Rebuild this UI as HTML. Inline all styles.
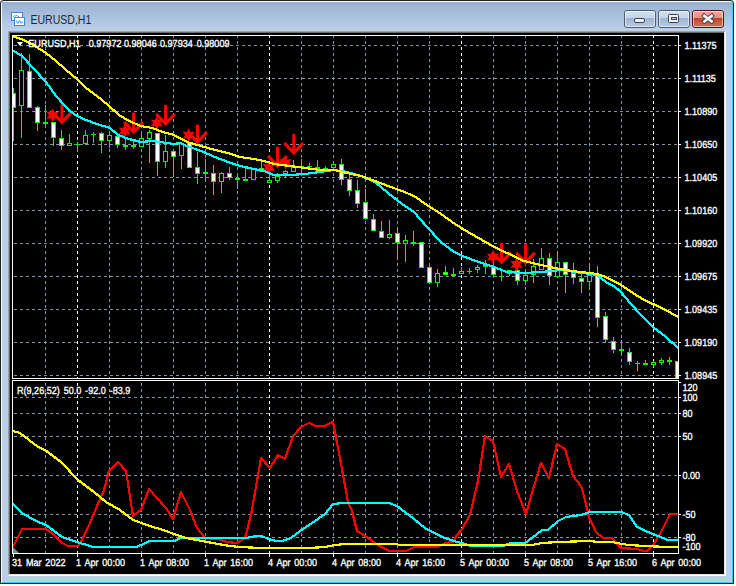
<!DOCTYPE html><html><head><meta charset="utf-8"><style>html,body{margin:0;padding:0;background:#ffffff;}svg{display:block;}text{font-family:"Liberation Sans", sans-serif;}</style></head><body>
<svg width="736" height="586" viewBox="0 0 736 586">
<defs>
<linearGradient id="tb" x1="0" y1="0" x2="0" y2="1"><stop offset="0" stop-color="#98b1cf"/><stop offset="1" stop-color="#bdd2ea"/></linearGradient>
<linearGradient id="btn" x1="0" y1="0" x2="0" y2="1"><stop offset="0" stop-color="#d3e1f1"/><stop offset="0.42" stop-color="#c3d5ea"/><stop offset="0.45" stop-color="#9db4cf"/><stop offset="1" stop-color="#b9cde4"/></linearGradient>
<linearGradient id="cls" x1="0" y1="0" x2="0" y2="1"><stop offset="0" stop-color="#eaa999"/><stop offset="0.42" stop-color="#e09684"/><stop offset="0.45" stop-color="#c2432b"/><stop offset="1" stop-color="#d5745c"/></linearGradient>
<clipPath id="cp"><rect x="13" y="36" width="665" height="342"/></clipPath>
<clipPath id="ci"><rect x="13" y="381" width="665" height="172"/></clipPath>
</defs>

<path d="M0,584 L0,4 Q0,0 4,0 L730,0 Q734,0 734,4 L734,584 Z" fill="#202020"/>
<path d="M1,583 L1,4 Q1,1 4,1 L730,1 Q733,1 733,4 L733,583 Z" fill="#ffffff"/>
<rect x="732" y="3" width="1" height="580" fill="#48c4ee"/>
<rect x="2" y="582" width="731" height="1" fill="#48c4ee"/>
<rect x="2" y="2" width="730" height="580" fill="#b9d1e8"/>
<rect x="2" y="2" width="730" height="29" fill="url(#tb)"/>
<rect x="8" y="31" width="718" height="545" fill="#ffffff"/>
<rect x="8" y="31" width="717" height="544" fill="#a0a0a0"/>
<rect x="9" y="32" width="716" height="543" fill="#e3e3e3"/>
<rect x="9" y="32" width="715" height="542" fill="#696969"/>
<rect x="10" y="33" width="714" height="541" fill="#000000"/>
<g shape-rendering="crispEdges">
<rect x="11" y="12" width="12" height="9" fill="#ffffff"/>
<rect x="11" y="12" width="1" height="1" fill="#3f8f9a"/>
<rect x="11" y="20" width="1" height="1" fill="#3f8f9a"/>
<rect x="12" y="12" width="1" height="1" fill="#3c86f2"/>
<rect x="12" y="20" width="1" height="1" fill="#3c86f2"/>
<rect x="13" y="12" width="1" height="1" fill="#3f8f9a"/>
<rect x="13" y="20" width="1" height="1" fill="#3f8f9a"/>
<rect x="14" y="12" width="1" height="1" fill="#3c86f2"/>
<rect x="14" y="20" width="1" height="1" fill="#3c86f2"/>
<rect x="15" y="12" width="1" height="1" fill="#3f8f9a"/>
<rect x="15" y="20" width="1" height="1" fill="#3f8f9a"/>
<rect x="16" y="12" width="1" height="1" fill="#3c86f2"/>
<rect x="16" y="20" width="1" height="1" fill="#3c86f2"/>
<rect x="17" y="12" width="1" height="1" fill="#3f8f9a"/>
<rect x="17" y="20" width="1" height="1" fill="#3f8f9a"/>
<rect x="18" y="12" width="1" height="1" fill="#3c86f2"/>
<rect x="18" y="20" width="1" height="1" fill="#3c86f2"/>
<rect x="19" y="12" width="1" height="1" fill="#3f8f9a"/>
<rect x="19" y="20" width="1" height="1" fill="#3f8f9a"/>
<rect x="20" y="12" width="1" height="1" fill="#3c86f2"/>
<rect x="20" y="20" width="1" height="1" fill="#3c86f2"/>
<rect x="21" y="12" width="1" height="1" fill="#3f8f9a"/>
<rect x="21" y="20" width="1" height="1" fill="#3f8f9a"/>
<rect x="22" y="12" width="1" height="1" fill="#3c86f2"/>
<rect x="22" y="20" width="1" height="1" fill="#3c86f2"/>
<rect x="11" y="13" width="1" height="1" fill="#3c86f2"/>
<rect x="22" y="13" width="1" height="1" fill="#3f8f9a"/>
<rect x="11" y="14" width="1" height="1" fill="#3f8f9a"/>
<rect x="22" y="14" width="1" height="1" fill="#3c86f2"/>
<rect x="11" y="15" width="1" height="1" fill="#3c86f2"/>
<rect x="22" y="15" width="1" height="1" fill="#3f8f9a"/>
<rect x="11" y="16" width="1" height="1" fill="#3f8f9a"/>
<rect x="22" y="16" width="1" height="1" fill="#3c86f2"/>
<rect x="11" y="17" width="1" height="1" fill="#3c86f2"/>
<rect x="22" y="17" width="1" height="1" fill="#3f8f9a"/>
<rect x="11" y="18" width="1" height="1" fill="#3f8f9a"/>
<rect x="22" y="18" width="1" height="1" fill="#3c86f2"/>
<rect x="11" y="19" width="1" height="1" fill="#3c86f2"/>
<rect x="22" y="19" width="1" height="1" fill="#3f8f9a"/>
<rect x="14" y="17" width="11" height="9" fill="#ffffff"/>
<rect x="14" y="17" width="1" height="1" fill="#3f8f9a"/>
<rect x="14" y="25" width="1" height="1" fill="#3f8f9a"/>
<rect x="15" y="17" width="1" height="1" fill="#3c86f2"/>
<rect x="15" y="25" width="1" height="1" fill="#3c86f2"/>
<rect x="16" y="17" width="1" height="1" fill="#3f8f9a"/>
<rect x="16" y="25" width="1" height="1" fill="#3f8f9a"/>
<rect x="17" y="17" width="1" height="1" fill="#3c86f2"/>
<rect x="17" y="25" width="1" height="1" fill="#3c86f2"/>
<rect x="18" y="17" width="1" height="1" fill="#3f8f9a"/>
<rect x="18" y="25" width="1" height="1" fill="#3f8f9a"/>
<rect x="19" y="17" width="1" height="1" fill="#3c86f2"/>
<rect x="19" y="25" width="1" height="1" fill="#3c86f2"/>
<rect x="20" y="17" width="1" height="1" fill="#3f8f9a"/>
<rect x="20" y="25" width="1" height="1" fill="#3f8f9a"/>
<rect x="21" y="17" width="1" height="1" fill="#3c86f2"/>
<rect x="21" y="25" width="1" height="1" fill="#3c86f2"/>
<rect x="22" y="17" width="1" height="1" fill="#3f8f9a"/>
<rect x="22" y="25" width="1" height="1" fill="#3f8f9a"/>
<rect x="23" y="17" width="1" height="1" fill="#3c86f2"/>
<rect x="23" y="25" width="1" height="1" fill="#3c86f2"/>
<rect x="24" y="17" width="1" height="1" fill="#3f8f9a"/>
<rect x="24" y="25" width="1" height="1" fill="#3f8f9a"/>
<rect x="14" y="18" width="1" height="1" fill="#3c86f2"/>
<rect x="24" y="18" width="1" height="1" fill="#3c86f2"/>
<rect x="14" y="19" width="1" height="1" fill="#3f8f9a"/>
<rect x="24" y="19" width="1" height="1" fill="#3f8f9a"/>
<rect x="14" y="20" width="1" height="1" fill="#3c86f2"/>
<rect x="24" y="20" width="1" height="1" fill="#3c86f2"/>
<rect x="14" y="21" width="1" height="1" fill="#3f8f9a"/>
<rect x="24" y="21" width="1" height="1" fill="#3f8f9a"/>
<rect x="14" y="22" width="1" height="1" fill="#3c86f2"/>
<rect x="24" y="22" width="1" height="1" fill="#3c86f2"/>
<rect x="14" y="23" width="1" height="1" fill="#3f8f9a"/>
<rect x="24" y="23" width="1" height="1" fill="#3f8f9a"/>
<rect x="14" y="24" width="1" height="1" fill="#3c86f2"/>
<rect x="24" y="24" width="1" height="1" fill="#3c86f2"/>
</g>
<polyline points="13,16.8 14.3,15.6 15.2,16.2 16.8,15.3 18,16.6 19,16.6" fill="none" stroke="#4f8ff0" stroke-width="1"/>
<polyline points="16.2,20.4 17.8,23.3 19.6,20.4 21.4,23.3 22.8,21.5" fill="none" stroke="#3f86f0" stroke-width="1"/>
<text transform="translate(30.5,23.5) scale(0.78,1)" font-size="13.5" fill="#1e2440">EURUSD,H1</text>
<rect x="624.5" y="10.5" width="31" height="17" rx="2.5" fill="url(#btn)" stroke="#4f5b6f" stroke-width="1"/><rect x="625.5" y="11.5" width="29" height="15" rx="1.5" fill="none" stroke="rgba(255,255,255,0.55)" stroke-width="1"/>
<rect x="658.5" y="10.5" width="31" height="17" rx="2.5" fill="url(#btn)" stroke="#4f5b6f" stroke-width="1"/><rect x="659.5" y="11.5" width="29" height="15" rx="1.5" fill="none" stroke="rgba(255,255,255,0.55)" stroke-width="1"/>
<rect x="692.5" y="10.5" width="31" height="17" rx="2.5" fill="url(#cls)" stroke="#4a1418" stroke-width="1"/><rect x="693.5" y="11.5" width="29" height="15" rx="1.5" fill="none" stroke="rgba(255,255,255,0.55)" stroke-width="1"/>
<rect x="634.5" y="18.5" width="10" height="4" rx="1.5" fill="#f2f2f2" stroke="#3c4352" stroke-width="1"/>
<rect x="668.5" y="14.5" width="10" height="8" rx="1" fill="#f2f2f2" stroke="#3c4352" stroke-width="1"/>
<rect x="671.5" y="17.5" width="5" height="2" fill="#b8cce2" stroke="#3c4352" stroke-width="1"/>
<path d="M704.3,15.9 L711.7,21.4 M711.7,15.9 L704.3,21.4" stroke="#3a3f4a" stroke-width="4.4" stroke-linecap="square"/>
<path d="M704.3,15.9 L711.7,21.4 M711.7,15.9 L704.3,21.4" stroke="#f6f6f6" stroke-width="2.6" stroke-linecap="square"/>
<g clip-path="url(#cp)" shape-rendering="crispEdges" stroke-width="1" stroke-dasharray="3 3">
<line x1="2" y1="45.5" x2="700" y2="45.5" stroke="#8393a8"/>
<line x1="2" y1="78.5" x2="700" y2="78.5" stroke="#8393a8"/>
<line x1="2" y1="111.5" x2="700" y2="111.5" stroke="#8393a8"/>
<line x1="2" y1="144.5" x2="700" y2="144.5" stroke="#8393a8"/>
<line x1="2" y1="177.5" x2="700" y2="177.5" stroke="#8393a8"/>
<line x1="2" y1="210.5" x2="700" y2="210.5" stroke="#8393a8"/>
<line x1="2" y1="243.5" x2="700" y2="243.5" stroke="#8393a8"/>
<line x1="2" y1="276.5" x2="700" y2="276.5" stroke="#8393a8"/>
<line x1="2" y1="309.5" x2="700" y2="309.5" stroke="#8393a8"/>
<line x1="2" y1="342.5" x2="700" y2="342.5" stroke="#8393a8"/>
<line x1="2" y1="375.5" x2="700" y2="375.5" stroke="#8393a8"/>
<line x1="45.5" y1="-1" x2="45.5" y2="600" stroke="#8393a8"/>
<line x1="77.5" y1="-1" x2="77.5" y2="600" stroke="#ffffff"/>
<line x1="109.5" y1="-1" x2="109.5" y2="600" stroke="#8393a8"/>
<line x1="141.5" y1="-1" x2="141.5" y2="600" stroke="#8393a8"/>
<line x1="173.5" y1="-1" x2="173.5" y2="600" stroke="#8393a8"/>
<line x1="205.5" y1="-1" x2="205.5" y2="600" stroke="#8393a8"/>
<line x1="237.5" y1="-1" x2="237.5" y2="600" stroke="#8393a8"/>
<line x1="269.5" y1="-1" x2="269.5" y2="600" stroke="#ffffff"/>
<line x1="301.5" y1="-1" x2="301.5" y2="600" stroke="#8393a8"/>
<line x1="333.5" y1="-1" x2="333.5" y2="600" stroke="#8393a8"/>
<line x1="365.5" y1="-1" x2="365.5" y2="600" stroke="#8393a8"/>
<line x1="397.5" y1="-1" x2="397.5" y2="600" stroke="#8393a8"/>
<line x1="429.5" y1="-1" x2="429.5" y2="600" stroke="#8393a8"/>
<line x1="461.5" y1="-1" x2="461.5" y2="600" stroke="#ffffff"/>
<line x1="493.5" y1="-1" x2="493.5" y2="600" stroke="#8393a8"/>
<line x1="525.5" y1="-1" x2="525.5" y2="600" stroke="#8393a8"/>
<line x1="557.5" y1="-1" x2="557.5" y2="600" stroke="#8393a8"/>
<line x1="589.5" y1="-1" x2="589.5" y2="600" stroke="#8393a8"/>
<line x1="621.5" y1="-1" x2="621.5" y2="600" stroke="#8393a8"/>
<line x1="653.5" y1="-1" x2="653.5" y2="600" stroke="#ffffff"/>
</g>
<g clip-path="url(#ci)" shape-rendering="crispEdges" stroke-width="1" stroke-dasharray="3 3">
<line x1="2" y1="397.5" x2="700" y2="397.5" stroke="#8393a8"/>
<line x1="2" y1="413.5" x2="700" y2="413.5" stroke="#8393a8"/>
<line x1="2" y1="436.5" x2="700" y2="436.5" stroke="#8393a8"/>
<line x1="2" y1="475.5" x2="700" y2="475.5" stroke="#8393a8"/>
<line x1="2" y1="514.5" x2="700" y2="514.5" stroke="#8393a8"/>
<line x1="2" y1="537.5" x2="700" y2="537.5" stroke="#8393a8"/>
<line x1="45.5" y1="-1" x2="45.5" y2="600" stroke="#8393a8"/>
<line x1="77.5" y1="-1" x2="77.5" y2="600" stroke="#ffffff"/>
<line x1="109.5" y1="-1" x2="109.5" y2="600" stroke="#8393a8"/>
<line x1="141.5" y1="-1" x2="141.5" y2="600" stroke="#8393a8"/>
<line x1="173.5" y1="-1" x2="173.5" y2="600" stroke="#8393a8"/>
<line x1="205.5" y1="-1" x2="205.5" y2="600" stroke="#8393a8"/>
<line x1="237.5" y1="-1" x2="237.5" y2="600" stroke="#8393a8"/>
<line x1="269.5" y1="-1" x2="269.5" y2="600" stroke="#ffffff"/>
<line x1="301.5" y1="-1" x2="301.5" y2="600" stroke="#8393a8"/>
<line x1="333.5" y1="-1" x2="333.5" y2="600" stroke="#8393a8"/>
<line x1="365.5" y1="-1" x2="365.5" y2="600" stroke="#8393a8"/>
<line x1="397.5" y1="-1" x2="397.5" y2="600" stroke="#8393a8"/>
<line x1="429.5" y1="-1" x2="429.5" y2="600" stroke="#8393a8"/>
<line x1="461.5" y1="-1" x2="461.5" y2="600" stroke="#ffffff"/>
<line x1="493.5" y1="-1" x2="493.5" y2="600" stroke="#8393a8"/>
<line x1="525.5" y1="-1" x2="525.5" y2="600" stroke="#8393a8"/>
<line x1="557.5" y1="-1" x2="557.5" y2="600" stroke="#8393a8"/>
<line x1="589.5" y1="-1" x2="589.5" y2="600" stroke="#8393a8"/>
<line x1="621.5" y1="-1" x2="621.5" y2="600" stroke="#8393a8"/>
<line x1="653.5" y1="-1" x2="653.5" y2="600" stroke="#ffffff"/>
</g>
<g shape-rendering="crispEdges" fill="#ffffff">
<rect x="12" y="35" width="667" height="1"/>
<rect x="12" y="35" width="1" height="344"/>
<rect x="678" y="35" width="1" height="344"/>
<rect x="12" y="378" width="667" height="1"/>
<rect x="12" y="380" width="667" height="1"/>
<rect x="12" y="380" width="1" height="174"/>
<rect x="678" y="380" width="1" height="174"/>
<rect x="12" y="553" width="667" height="1"/>
<rect x="679" y="45" width="2" height="1"/>
<rect x="679" y="78" width="2" height="1"/>
<rect x="679" y="111" width="2" height="1"/>
<rect x="679" y="144" width="2" height="1"/>
<rect x="679" y="177" width="2" height="1"/>
<rect x="679" y="210" width="2" height="1"/>
<rect x="679" y="243" width="2" height="1"/>
<rect x="679" y="276" width="2" height="1"/>
<rect x="679" y="309" width="2" height="1"/>
<rect x="679" y="342" width="2" height="1"/>
<rect x="679" y="375" width="2" height="1"/>
<rect x="679" y="382" width="2" height="1"/>
<rect x="679" y="397" width="2" height="1"/>
<rect x="679" y="413" width="2" height="1"/>
<rect x="679" y="436" width="2" height="1"/>
<rect x="679" y="475" width="2" height="1"/>
<rect x="679" y="514" width="2" height="1"/>
<rect x="679" y="537" width="2" height="1"/>
<rect x="13" y="554" width="1" height="3"/>
<rect x="77" y="554" width="1" height="3"/>
<rect x="141" y="554" width="1" height="3"/>
<rect x="205" y="554" width="1" height="3"/>
<rect x="269" y="554" width="1" height="3"/>
<rect x="333" y="554" width="1" height="3"/>
<rect x="397" y="554" width="1" height="3"/>
<rect x="461" y="554" width="1" height="3"/>
<rect x="525" y="554" width="1" height="3"/>
<rect x="589" y="554" width="1" height="3"/>
<rect x="653" y="554" width="1" height="3"/>
</g>
<g clip-path="url(#cp)" shape-rendering="crispEdges">
<rect x="13" y="88" width="1" height="53" fill="#00ff00"/>
<rect x="11" y="93" width="5" height="15" fill="#00ff00"/>
<rect x="12" y="94" width="3" height="13" fill="#ffffff"/>
<rect x="21" y="53" width="1" height="85" fill="#00ff00"/>
<rect x="19" y="70" width="5" height="36" fill="#00ff00"/>
<rect x="20" y="71" width="3" height="34" fill="#000000"/>
<rect x="29" y="54" width="1" height="54" fill="#00ff00"/>
<rect x="27" y="71" width="5" height="37" fill="#00ff00"/>
<rect x="28" y="72" width="3" height="35" fill="#ffffff"/>
<rect x="37" y="106" width="1" height="25" fill="#00ff00"/>
<rect x="35" y="107" width="5" height="16" fill="#00ff00"/>
<rect x="36" y="108" width="3" height="14" fill="#ffffff"/>
<rect x="45" y="105" width="1" height="21" fill="#00ff00"/>
<rect x="43" y="122" width="5" height="2" fill="#00ff00"/>
<rect x="53" y="122" width="1" height="24" fill="#00ff00"/>
<rect x="51" y="122" width="5" height="16" fill="#00ff00"/>
<rect x="52" y="123" width="3" height="14" fill="#ffffff"/>
<rect x="61" y="130" width="1" height="20" fill="#00ff00"/>
<rect x="59" y="138" width="5" height="8" fill="#00ff00"/>
<rect x="60" y="139" width="3" height="6" fill="#ffffff"/>
<rect x="69" y="134" width="1" height="12" fill="#00ff00"/>
<rect x="67" y="143" width="5" height="3" fill="#00ff00"/>
<rect x="68" y="144" width="3" height="1" fill="#000000"/>
<rect x="77" y="142" width="1" height="10" fill="#00ff00"/>
<rect x="75" y="144" width="5" height="1" fill="#00ff00"/>
<rect x="85" y="130" width="1" height="15" fill="#00ff00"/>
<rect x="83" y="135" width="5" height="9" fill="#00ff00"/>
<rect x="84" y="136" width="3" height="7" fill="#000000"/>
<rect x="93" y="132" width="1" height="11" fill="#00ff00"/>
<rect x="91" y="134" width="5" height="1" fill="#00ff00"/>
<rect x="101" y="132" width="1" height="21" fill="#00ff00"/>
<rect x="99" y="133" width="5" height="8" fill="#00ff00"/>
<rect x="100" y="134" width="3" height="6" fill="#ffffff"/>
<rect x="109" y="133" width="1" height="15" fill="#00ff00"/>
<rect x="107" y="135" width="5" height="6" fill="#00ff00"/>
<rect x="108" y="136" width="3" height="4" fill="#000000"/>
<rect x="117" y="135" width="1" height="13" fill="#00ff00"/>
<rect x="115" y="136" width="5" height="9" fill="#00ff00"/>
<rect x="116" y="137" width="3" height="7" fill="#ffffff"/>
<rect x="125" y="138" width="1" height="12" fill="#00ff00"/>
<rect x="123" y="145" width="5" height="2" fill="#00ff00"/>
<rect x="133" y="141" width="1" height="8" fill="#00ff00"/>
<rect x="131" y="145" width="5" height="2" fill="#00ff00"/>
<rect x="141" y="131" width="1" height="16" fill="#00ff00"/>
<rect x="139" y="138" width="5" height="9" fill="#00ff00"/>
<rect x="140" y="139" width="3" height="7" fill="#000000"/>
<rect x="149" y="130" width="1" height="33" fill="#00ff00"/>
<rect x="147" y="132" width="5" height="7" fill="#00ff00"/>
<rect x="148" y="133" width="3" height="5" fill="#000000"/>
<rect x="157" y="133" width="1" height="43" fill="#00ff00"/>
<rect x="155" y="133" width="5" height="29" fill="#00ff00"/>
<rect x="156" y="134" width="3" height="27" fill="#ffffff"/>
<rect x="165" y="135" width="1" height="33" fill="#00ff00"/>
<rect x="163" y="151" width="5" height="11" fill="#00ff00"/>
<rect x="164" y="152" width="3" height="9" fill="#000000"/>
<rect x="173" y="151" width="1" height="26" fill="#00ff00"/>
<rect x="171" y="151" width="5" height="6" fill="#00ff00"/>
<rect x="172" y="152" width="3" height="4" fill="#ffffff"/>
<rect x="181" y="142" width="1" height="27" fill="#00ff00"/>
<rect x="179" y="143" width="5" height="13" fill="#00ff00"/>
<rect x="180" y="144" width="3" height="11" fill="#000000"/>
<rect x="189" y="143" width="1" height="25" fill="#00ff00"/>
<rect x="187" y="143" width="5" height="25" fill="#00ff00"/>
<rect x="188" y="144" width="3" height="23" fill="#ffffff"/>
<rect x="197" y="152" width="1" height="32" fill="#00ff00"/>
<rect x="195" y="167" width="5" height="7" fill="#00ff00"/>
<rect x="196" y="168" width="3" height="5" fill="#ffffff"/>
<rect x="205" y="159" width="1" height="22" fill="#00ff00"/>
<rect x="203" y="172" width="5" height="2" fill="#00ff00"/>
<rect x="213" y="165" width="1" height="30" fill="#00ff00"/>
<rect x="211" y="173" width="5" height="9" fill="#00ff00"/>
<rect x="212" y="174" width="3" height="7" fill="#ffffff"/>
<rect x="221" y="172" width="1" height="21" fill="#00ff00"/>
<rect x="219" y="173" width="5" height="9" fill="#00ff00"/>
<rect x="220" y="174" width="3" height="7" fill="#000000"/>
<rect x="229" y="167" width="1" height="13" fill="#00ff00"/>
<rect x="227" y="173" width="5" height="5" fill="#00ff00"/>
<rect x="228" y="174" width="3" height="3" fill="#ffffff"/>
<rect x="237" y="175" width="1" height="14" fill="#00ff00"/>
<rect x="235" y="178" width="5" height="2" fill="#00ff00"/>
<rect x="245" y="168" width="1" height="13" fill="#00ff00"/>
<rect x="243" y="179" width="5" height="2" fill="#00ff00"/>
<rect x="253" y="168" width="1" height="12" fill="#00ff00"/>
<rect x="251" y="168" width="5" height="12" fill="#00ff00"/>
<rect x="252" y="169" width="3" height="10" fill="#000000"/>
<rect x="261" y="162" width="1" height="10" fill="#00ff00"/>
<rect x="259" y="168" width="5" height="4" fill="#00ff00"/>
<rect x="260" y="169" width="3" height="2" fill="#ffffff"/>
<rect x="269" y="173" width="1" height="10" fill="#00ff00"/>
<rect x="267" y="180" width="5" height="3" fill="#00ff00"/>
<rect x="268" y="181" width="3" height="1" fill="#000000"/>
<rect x="277" y="173" width="1" height="10" fill="#00ff00"/>
<rect x="275" y="176" width="5" height="5" fill="#00ff00"/>
<rect x="276" y="177" width="3" height="3" fill="#000000"/>
<rect x="285" y="170" width="1" height="8" fill="#00ff00"/>
<rect x="283" y="171" width="5" height="3" fill="#00ff00"/>
<rect x="284" y="172" width="3" height="1" fill="#000000"/>
<rect x="293" y="160" width="1" height="12" fill="#00ff00"/>
<rect x="291" y="167" width="5" height="5" fill="#00ff00"/>
<rect x="292" y="168" width="3" height="3" fill="#000000"/>
<rect x="301" y="159" width="1" height="14" fill="#00ff00"/>
<rect x="299" y="166" width="5" height="2" fill="#00ff00"/>
<rect x="309" y="163" width="1" height="5" fill="#00ff00"/>
<rect x="307" y="166" width="5" height="1" fill="#00ff00"/>
<rect x="317" y="160" width="1" height="9" fill="#00ff00"/>
<rect x="315" y="167" width="5" height="2" fill="#00ff00"/>
<rect x="325" y="166" width="1" height="3" fill="#00ff00"/>
<rect x="323" y="168" width="5" height="2" fill="#00ff00"/>
<rect x="333" y="162" width="1" height="6" fill="#00ff00"/>
<rect x="331" y="164" width="5" height="4" fill="#00ff00"/>
<rect x="332" y="165" width="3" height="2" fill="#000000"/>
<rect x="341" y="159" width="1" height="26" fill="#00ff00"/>
<rect x="339" y="164" width="5" height="16" fill="#00ff00"/>
<rect x="340" y="165" width="3" height="14" fill="#ffffff"/>
<rect x="349" y="175" width="1" height="21" fill="#00ff00"/>
<rect x="347" y="179" width="5" height="12" fill="#00ff00"/>
<rect x="348" y="180" width="3" height="10" fill="#ffffff"/>
<rect x="357" y="180" width="1" height="28" fill="#00ff00"/>
<rect x="355" y="190" width="5" height="14" fill="#00ff00"/>
<rect x="356" y="191" width="3" height="12" fill="#ffffff"/>
<rect x="365" y="189" width="1" height="31" fill="#00ff00"/>
<rect x="363" y="202" width="5" height="17" fill="#00ff00"/>
<rect x="364" y="203" width="3" height="15" fill="#ffffff"/>
<rect x="373" y="214" width="1" height="17" fill="#00ff00"/>
<rect x="371" y="219" width="5" height="12" fill="#00ff00"/>
<rect x="372" y="220" width="3" height="10" fill="#ffffff"/>
<rect x="381" y="221" width="1" height="17" fill="#00ff00"/>
<rect x="379" y="231" width="5" height="7" fill="#00ff00"/>
<rect x="380" y="232" width="3" height="5" fill="#ffffff"/>
<rect x="389" y="220" width="1" height="19" fill="#00ff00"/>
<rect x="387" y="234" width="5" height="4" fill="#00ff00"/>
<rect x="388" y="235" width="3" height="2" fill="#000000"/>
<rect x="397" y="229" width="1" height="30" fill="#00ff00"/>
<rect x="395" y="233" width="5" height="10" fill="#00ff00"/>
<rect x="396" y="234" width="3" height="8" fill="#ffffff"/>
<rect x="405" y="235" width="1" height="27" fill="#00ff00"/>
<rect x="403" y="240" width="5" height="4" fill="#00ff00"/>
<rect x="404" y="241" width="3" height="2" fill="#000000"/>
<rect x="413" y="231" width="1" height="15" fill="#00ff00"/>
<rect x="411" y="242" width="5" height="2" fill="#00ff00"/>
<rect x="421" y="242" width="1" height="26" fill="#00ff00"/>
<rect x="419" y="242" width="5" height="26" fill="#00ff00"/>
<rect x="420" y="243" width="3" height="24" fill="#ffffff"/>
<rect x="429" y="264" width="1" height="20" fill="#00ff00"/>
<rect x="427" y="267" width="5" height="16" fill="#00ff00"/>
<rect x="428" y="268" width="3" height="14" fill="#ffffff"/>
<rect x="437" y="269" width="1" height="18" fill="#00ff00"/>
<rect x="435" y="273" width="5" height="10" fill="#00ff00"/>
<rect x="436" y="274" width="3" height="8" fill="#000000"/>
<rect x="445" y="266" width="1" height="9" fill="#00ff00"/>
<rect x="443" y="272" width="5" height="3" fill="#00ff00"/>
<rect x="444" y="273" width="3" height="1" fill="#ffffff"/>
<rect x="453" y="268" width="1" height="8" fill="#00ff00"/>
<rect x="451" y="274" width="5" height="2" fill="#00ff00"/>
<rect x="461" y="267" width="1" height="7" fill="#00ff00"/>
<rect x="459" y="271" width="5" height="3" fill="#00ff00"/>
<rect x="460" y="272" width="3" height="1" fill="#000000"/>
<rect x="469" y="268" width="1" height="6" fill="#00ff00"/>
<rect x="467" y="271" width="5" height="1" fill="#00ff00"/>
<rect x="477" y="265" width="1" height="8" fill="#00ff00"/>
<rect x="475" y="267" width="5" height="3" fill="#00ff00"/>
<rect x="476" y="268" width="3" height="1" fill="#000000"/>
<rect x="485" y="260" width="1" height="14" fill="#00ff00"/>
<rect x="483" y="265" width="5" height="2" fill="#00ff00"/>
<rect x="493" y="252" width="1" height="26" fill="#00ff00"/>
<rect x="491" y="266" width="5" height="9" fill="#00ff00"/>
<rect x="492" y="267" width="3" height="7" fill="#ffffff"/>
<rect x="501" y="269" width="1" height="12" fill="#00ff00"/>
<rect x="499" y="276" width="5" height="1" fill="#00ff00"/>
<rect x="509" y="270" width="1" height="6" fill="#00ff00"/>
<rect x="507" y="270" width="5" height="4" fill="#00ff00"/>
<rect x="508" y="271" width="3" height="2" fill="#000000"/>
<rect x="517" y="268" width="1" height="17" fill="#00ff00"/>
<rect x="515" y="270" width="5" height="11" fill="#00ff00"/>
<rect x="516" y="271" width="3" height="9" fill="#ffffff"/>
<rect x="525" y="271" width="1" height="14" fill="#00ff00"/>
<rect x="523" y="275" width="5" height="6" fill="#00ff00"/>
<rect x="524" y="276" width="3" height="4" fill="#000000"/>
<rect x="533" y="259" width="1" height="24" fill="#00ff00"/>
<rect x="531" y="266" width="5" height="9" fill="#00ff00"/>
<rect x="532" y="267" width="3" height="7" fill="#000000"/>
<rect x="541" y="248" width="1" height="22" fill="#00ff00"/>
<rect x="539" y="258" width="5" height="12" fill="#00ff00"/>
<rect x="540" y="259" width="3" height="10" fill="#000000"/>
<rect x="549" y="253" width="1" height="32" fill="#00ff00"/>
<rect x="547" y="258" width="5" height="18" fill="#00ff00"/>
<rect x="548" y="259" width="3" height="16" fill="#ffffff"/>
<rect x="557" y="253" width="1" height="25" fill="#00ff00"/>
<rect x="555" y="262" width="5" height="15" fill="#00ff00"/>
<rect x="556" y="263" width="3" height="13" fill="#000000"/>
<rect x="565" y="262" width="1" height="31" fill="#00ff00"/>
<rect x="563" y="262" width="5" height="13" fill="#00ff00"/>
<rect x="564" y="263" width="3" height="11" fill="#ffffff"/>
<rect x="573" y="263" width="1" height="21" fill="#00ff00"/>
<rect x="571" y="273" width="5" height="5" fill="#00ff00"/>
<rect x="572" y="274" width="3" height="3" fill="#ffffff"/>
<rect x="581" y="273" width="1" height="20" fill="#00ff00"/>
<rect x="579" y="278" width="5" height="4" fill="#00ff00"/>
<rect x="580" y="279" width="3" height="2" fill="#ffffff"/>
<rect x="589" y="266" width="1" height="24" fill="#00ff00"/>
<rect x="587" y="275" width="5" height="7" fill="#00ff00"/>
<rect x="588" y="276" width="3" height="5" fill="#000000"/>
<rect x="597" y="266" width="1" height="61" fill="#00ff00"/>
<rect x="595" y="274" width="5" height="44" fill="#00ff00"/>
<rect x="596" y="275" width="3" height="42" fill="#ffffff"/>
<rect x="605" y="312" width="1" height="31" fill="#00ff00"/>
<rect x="603" y="316" width="5" height="24" fill="#00ff00"/>
<rect x="604" y="317" width="3" height="22" fill="#ffffff"/>
<rect x="613" y="337" width="1" height="16" fill="#00ff00"/>
<rect x="611" y="341" width="5" height="9" fill="#00ff00"/>
<rect x="612" y="342" width="3" height="7" fill="#ffffff"/>
<rect x="621" y="340" width="1" height="14" fill="#00ff00"/>
<rect x="619" y="349" width="5" height="2" fill="#00ff00"/>
<rect x="629" y="348" width="1" height="17" fill="#00ff00"/>
<rect x="627" y="352" width="5" height="10" fill="#00ff00"/>
<rect x="628" y="353" width="3" height="8" fill="#ffffff"/>
<rect x="637" y="361" width="1" height="10" fill="#00ff00"/>
<rect x="635" y="363" width="5" height="1" fill="#00ff00"/>
<rect x="645" y="360" width="1" height="5" fill="#00ff00"/>
<rect x="643" y="363" width="5" height="2" fill="#00ff00"/>
<rect x="653" y="361" width="1" height="6" fill="#00ff00"/>
<rect x="651" y="362" width="5" height="3" fill="#00ff00"/>
<rect x="652" y="363" width="3" height="1" fill="#000000"/>
<rect x="661" y="358" width="1" height="7" fill="#00ff00"/>
<rect x="659" y="360" width="5" height="3" fill="#00ff00"/>
<rect x="660" y="361" width="3" height="1" fill="#000000"/>
<rect x="669" y="357" width="1" height="8" fill="#00ff00"/>
<rect x="667" y="360" width="5" height="2" fill="#00ff00"/>
<rect x="677" y="361" width="1" height="18" fill="#00ff00"/>
<rect x="675" y="361" width="5" height="18" fill="#00ff00"/>
<rect x="676" y="362" width="3" height="16" fill="#ffffff"/>
</g>
<g clip-path="url(#cp)" fill="#ff0000">
<polygon points="52.60,108.20 54.40,112.08 58.66,111.70 56.20,115.20 58.66,118.70 54.40,118.32 52.60,122.20 50.80,118.32 46.54,118.70 49.00,115.20 46.54,111.70 50.80,112.08"/>
<polygon points="124.80,124.10 126.60,127.98 130.86,127.60 128.40,131.10 130.86,134.60 126.60,134.22 124.80,138.10 123.00,134.22 118.74,134.60 121.20,131.10 118.74,127.60 123.00,127.98"/>
<polygon points="156.80,116.00 158.60,119.88 162.86,119.50 160.40,123.00 162.86,126.50 158.60,126.12 156.80,130.00 155.00,126.12 150.74,126.50 153.20,123.00 150.74,119.50 155.00,119.88"/>
<polygon points="188.70,128.20 190.50,132.08 194.76,131.70 192.30,135.20 194.76,138.70 190.50,138.32 188.70,142.20 186.90,138.32 182.64,138.70 185.10,135.20 182.64,131.70 186.90,132.08"/>
<polygon points="268.80,160.50 270.60,164.38 274.86,164.00 272.40,167.50 274.86,171.00 270.60,170.62 268.80,174.50 267.00,170.62 262.74,171.00 265.20,167.50 262.74,164.00 267.00,164.38"/>
<polygon points="285.50,155.50 287.30,159.38 291.56,159.00 289.10,162.50 291.56,166.00 287.30,165.62 285.50,169.50 283.70,165.62 279.44,166.00 281.90,162.50 279.44,159.00 283.70,159.38"/>
<polygon points="492.90,250.00 494.70,253.88 498.96,253.50 496.50,257.00 498.96,260.50 494.70,260.12 492.90,264.00 491.10,260.12 486.84,260.50 489.30,257.00 486.84,253.50 491.10,253.88"/>
<polygon points="516.60,257.40 518.40,261.28 522.66,260.90 520.20,264.40 522.66,267.90 518.40,267.52 516.60,271.40 514.80,267.52 510.54,267.90 513.00,264.40 510.54,260.90 514.80,261.28"/>
<rect x="60.5" y="104.3" width="3" height="18.2"/>
<polyline points="52.6,112.3 62.0,122.1 71.4,112.3" fill="none" stroke="#ff0000" stroke-width="3.2" stroke-linejoin="miter"/>
<rect x="132.1" y="112.7" width="3" height="19.7"/>
<polyline points="124.2,122.2 133.6,132.0 143.0,122.2" fill="none" stroke="#ff0000" stroke-width="3.2" stroke-linejoin="miter"/>
<rect x="164.1" y="104.9" width="3" height="19.3"/>
<polyline points="156.2,114.0 165.6,123.8 175.0,114.0" fill="none" stroke="#ff0000" stroke-width="3.2" stroke-linejoin="miter"/>
<rect x="196.0" y="124.8" width="3" height="17.7"/>
<polyline points="188.1,132.3 197.5,142.1 206.9,132.3" fill="none" stroke="#ff0000" stroke-width="3.2" stroke-linejoin="miter"/>
<rect x="276.0" y="146.8" width="3" height="19.5"/>
<polyline points="268.1,156.1 277.5,165.9 286.9,156.1" fill="none" stroke="#ff0000" stroke-width="3.2" stroke-linejoin="miter"/>
<rect x="292.3" y="133.8" width="3" height="19.5"/>
<polyline points="284.4,143.1 293.8,152.9 303.2,143.1" fill="none" stroke="#ff0000" stroke-width="3.2" stroke-linejoin="miter"/>
<rect x="500.0" y="242.8" width="3" height="19.8"/>
<polyline points="492.1,252.4 501.5,262.2 510.9,252.4" fill="none" stroke="#ff0000" stroke-width="3.2" stroke-linejoin="miter"/>
<rect x="524.1" y="243.5" width="3" height="19.5"/>
<polyline points="516.2,252.8 525.6,262.6 535.0,252.8" fill="none" stroke="#ff0000" stroke-width="3.2" stroke-linejoin="miter"/>
</g>
<polyline points="12,50 22,56 33,68 46,82 56,96 65,106 70,111 77,116 86,120 97,124 110,128 118,135 129,139 141,142 152,141 160,142 174,144 180,143 187,146 201,151 215,157 228,162 240,166 254,169 264,171 274,175 291,175 305,174 320,172 334,170 347,172 361,176 375,182 388,193 402,204 414,212 427,227 441,242 454,252 465,257 476,261 491,266 507,272 524,273 541,272 561,270 590,274 597,275 606,282 615,287 621,292 630,303 641,315 653,327 666,337 678,348" fill="none" stroke="#00ffff" stroke-width="2.2" stroke-linejoin="round" shape-rendering="crispEdges" clip-path="url(#cp)"/>
<polyline points="12,36 24,40 35,46 46,53 56,61 65,69 78,80 86,88 97,96 108,105 119,115 129,121 141,126 152,128 163,132 174,135 187,142 201,146 215,150 228,153 240,157 254,159 264,161 274,164 290,166 305,168 320,170 334,170 347,173 361,176 375,181 388,186 402,191 414,196 427,205 441,214 455,224 468,232 482,240 496,248 507,253 524,261 541,265 560,269 572,271 590,273 597,274 606,277 621,285 633,293 644,300 653,304 664,309 678,317" fill="none" stroke="#ffff00" stroke-width="2.2" stroke-linejoin="round" shape-rendering="crispEdges" clip-path="url(#cp)"/>
<polyline points="13,547 22,529 46,529 52,533 62,543 68,546 78,546 83,538 90,523 97,506 104,490 109,471 118,462 126,471 133,516 141,510 149,489 157,498 166,508 173,519 181,492 190,510 197,528 205,538 218,539 227,542 237,543 245,538 251,515 261,458 270,468 278,455 285,459 293,436 301,427 309,423 316,426 324,426 333,422 340,458 348,502 352,511 357,531 365,536 378,545 389,551 406,551 414,547 438,547 445,543 453,542 457,535 462,529 470,515 478,481 485,436 493,441 501,477 509,464 517,491 526,514 532,493 541,463 549,478 557,444 565,449 573,476 581,486 583,492 589,517 596,532 603,538 612,538 621,548 637,549 644,551 647,551 653,545 660,534 670,514 678,514" fill="none" stroke="#ff0000" stroke-width="2.2" stroke-linejoin="round" shape-rendering="crispEdges" clip-path="url(#ci)"/>
<polyline points="13,504 22,513 36,521 46,525 62,537 77,542 93,547 136,547 141,545 150,541 174,541 181,538 246,538 256,536 261,536 269,539 276,541 282,541 291,538 300,531 312,523 325,514 333,504 343,503 389,503 397,506 409,515 425,528 442,537 457,542 466,544 470,546 504,546 507,544 512,543 525,543 532,538 542,530 548,530 558,521 566,517 581,515 590,512 621,512 629,515 637,527 648,532 658,536 668,540 678,540" fill="none" stroke="#00ffff" stroke-width="2.2" stroke-linejoin="round" shape-rendering="crispEdges" clip-path="url(#ci)"/>
<polyline points="13,431 20,433 29,440 38,447 45,450 61,462 78,480 94,492 106,502 120,510 133,520 147,525 166,531 174,534 186,538 202,541 218,544 230,546 240,547 261,548 309,548 325,547 335,545 345,544 397,544 399,545 532,545 542,543 558,542 590,541 598,542 612,542 622,544 629,545 645,546 668,547 678,547" fill="none" stroke="#ffff00" stroke-width="2.2" stroke-linejoin="round" shape-rendering="crispEdges" clip-path="url(#ci)"/>
<polygon points="13,547 13,553 19,553" fill="#7a8898"/>
<polygon points="17,42 23,42 20,46" fill="#ffffff"/>
<text transform="translate(28.30,47.00) scale(0.880,1)" font-size="10.30" fill="#ffffff" stroke="#ffffff" stroke-width="0.35" word-spacing="1.5" text-rendering="geometricPrecision" text-anchor="start">EURUSD,H1</text>
<text transform="translate(88.70,47.00) scale(0.880,1)" font-size="10.30" fill="#ffffff" stroke="#ffffff" stroke-width="0.35" word-spacing="1.5" text-rendering="geometricPrecision" text-anchor="start">0.97972</text>
<text transform="translate(124.00,47.00) scale(0.880,1)" font-size="10.30" fill="#ffffff" stroke="#ffffff" stroke-width="0.35" word-spacing="1.5" text-rendering="geometricPrecision" text-anchor="start">0.98046</text>
<text transform="translate(160.00,47.00) scale(0.880,1)" font-size="10.30" fill="#ffffff" stroke="#ffffff" stroke-width="0.35" word-spacing="1.5" text-rendering="geometricPrecision" text-anchor="start">0.97934</text>
<text transform="translate(196.70,47.00) scale(0.880,1)" font-size="10.30" fill="#ffffff" stroke="#ffffff" stroke-width="0.35" word-spacing="1.5" text-rendering="geometricPrecision" text-anchor="start">0.98009</text>
<text transform="translate(17.00,393.50) scale(0.880,1)" font-size="10.30" fill="#ffffff" stroke="#ffffff" stroke-width="0.35" word-spacing="1.5" text-rendering="geometricPrecision" text-anchor="start">R(9,26,52) 50.0 -92.0 -83.9</text>
<text transform="translate(684.50,48.60) scale(0.880,1)" font-size="10.30" fill="#ffffff" stroke="#ffffff" stroke-width="0.35" word-spacing="1.5" text-rendering="geometricPrecision" text-anchor="start">1.11375</text>
<text transform="translate(684.50,81.60) scale(0.880,1)" font-size="10.30" fill="#ffffff" stroke="#ffffff" stroke-width="0.35" word-spacing="1.5" text-rendering="geometricPrecision" text-anchor="start">1.11135</text>
<text transform="translate(684.50,114.60) scale(0.880,1)" font-size="10.30" fill="#ffffff" stroke="#ffffff" stroke-width="0.35" word-spacing="1.5" text-rendering="geometricPrecision" text-anchor="start">1.10890</text>
<text transform="translate(684.50,147.60) scale(0.880,1)" font-size="10.30" fill="#ffffff" stroke="#ffffff" stroke-width="0.35" word-spacing="1.5" text-rendering="geometricPrecision" text-anchor="start">1.10650</text>
<text transform="translate(684.50,180.60) scale(0.880,1)" font-size="10.30" fill="#ffffff" stroke="#ffffff" stroke-width="0.35" word-spacing="1.5" text-rendering="geometricPrecision" text-anchor="start">1.10405</text>
<text transform="translate(684.50,213.60) scale(0.880,1)" font-size="10.30" fill="#ffffff" stroke="#ffffff" stroke-width="0.35" word-spacing="1.5" text-rendering="geometricPrecision" text-anchor="start">1.10160</text>
<text transform="translate(684.50,246.60) scale(0.880,1)" font-size="10.30" fill="#ffffff" stroke="#ffffff" stroke-width="0.35" word-spacing="1.5" text-rendering="geometricPrecision" text-anchor="start">1.09920</text>
<text transform="translate(684.50,279.60) scale(0.880,1)" font-size="10.30" fill="#ffffff" stroke="#ffffff" stroke-width="0.35" word-spacing="1.5" text-rendering="geometricPrecision" text-anchor="start">1.09675</text>
<text transform="translate(684.50,312.60) scale(0.880,1)" font-size="10.30" fill="#ffffff" stroke="#ffffff" stroke-width="0.35" word-spacing="1.5" text-rendering="geometricPrecision" text-anchor="start">1.09435</text>
<text transform="translate(684.50,345.60) scale(0.880,1)" font-size="10.30" fill="#ffffff" stroke="#ffffff" stroke-width="0.35" word-spacing="1.5" text-rendering="geometricPrecision" text-anchor="start">1.09190</text>
<text transform="translate(684.50,378.60) scale(0.880,1)" font-size="10.30" fill="#ffffff" stroke="#ffffff" stroke-width="0.35" word-spacing="1.5" text-rendering="geometricPrecision" text-anchor="start">1.08945</text>
<text transform="translate(682.50,391.10) scale(0.880,1)" font-size="10.30" fill="#ffffff" stroke="#ffffff" stroke-width="0.35" word-spacing="1.5" text-rendering="geometricPrecision" text-anchor="start">120</text>
<text transform="translate(682.50,400.60) scale(0.880,1)" font-size="10.30" fill="#ffffff" stroke="#ffffff" stroke-width="0.35" word-spacing="1.5" text-rendering="geometricPrecision" text-anchor="start">100</text>
<text transform="translate(682.50,416.60) scale(0.880,1)" font-size="10.30" fill="#ffffff" stroke="#ffffff" stroke-width="0.35" word-spacing="1.5" text-rendering="geometricPrecision" text-anchor="start">80</text>
<text transform="translate(682.50,439.60) scale(0.880,1)" font-size="10.30" fill="#ffffff" stroke="#ffffff" stroke-width="0.35" word-spacing="1.5" text-rendering="geometricPrecision" text-anchor="start">50</text>
<text transform="translate(682.50,478.60) scale(0.880,1)" font-size="10.30" fill="#ffffff" stroke="#ffffff" stroke-width="0.35" word-spacing="1.5" text-rendering="geometricPrecision" text-anchor="start">0.00</text>
<text transform="translate(682.50,517.60) scale(0.880,1)" font-size="10.30" fill="#ffffff" stroke="#ffffff" stroke-width="0.35" word-spacing="1.5" text-rendering="geometricPrecision" text-anchor="start">-50</text>
<text transform="translate(682.50,540.60) scale(0.880,1)" font-size="10.30" fill="#ffffff" stroke="#ffffff" stroke-width="0.35" word-spacing="1.5" text-rendering="geometricPrecision" text-anchor="start">-80</text>
<text transform="translate(682.50,549.60) scale(0.880,1)" font-size="10.30" fill="#ffffff" stroke="#ffffff" stroke-width="0.35" word-spacing="1.5" text-rendering="geometricPrecision" text-anchor="start">-100</text>
<text transform="translate(12.00,566.00) scale(0.880,1)" font-size="10.30" fill="#ffffff" stroke="#ffffff" stroke-width="0.35" word-spacing="1.5" text-rendering="geometricPrecision" text-anchor="start">31 Mar 2022</text>
<text transform="translate(76.00,566.00) scale(0.880,1)" font-size="10.30" fill="#ffffff" stroke="#ffffff" stroke-width="0.35" word-spacing="1.5" text-rendering="geometricPrecision" text-anchor="start">1 Apr 00:00</text>
<text transform="translate(140.00,566.00) scale(0.880,1)" font-size="10.30" fill="#ffffff" stroke="#ffffff" stroke-width="0.35" word-spacing="1.5" text-rendering="geometricPrecision" text-anchor="start">1 Apr 08:00</text>
<text transform="translate(204.00,566.00) scale(0.880,1)" font-size="10.30" fill="#ffffff" stroke="#ffffff" stroke-width="0.35" word-spacing="1.5" text-rendering="geometricPrecision" text-anchor="start">1 Apr 16:00</text>
<text transform="translate(268.00,566.00) scale(0.880,1)" font-size="10.30" fill="#ffffff" stroke="#ffffff" stroke-width="0.35" word-spacing="1.5" text-rendering="geometricPrecision" text-anchor="start">4 Apr 00:00</text>
<text transform="translate(332.00,566.00) scale(0.880,1)" font-size="10.30" fill="#ffffff" stroke="#ffffff" stroke-width="0.35" word-spacing="1.5" text-rendering="geometricPrecision" text-anchor="start">4 Apr 08:00</text>
<text transform="translate(396.00,566.00) scale(0.880,1)" font-size="10.30" fill="#ffffff" stroke="#ffffff" stroke-width="0.35" word-spacing="1.5" text-rendering="geometricPrecision" text-anchor="start">4 Apr 16:00</text>
<text transform="translate(460.00,566.00) scale(0.880,1)" font-size="10.30" fill="#ffffff" stroke="#ffffff" stroke-width="0.35" word-spacing="1.5" text-rendering="geometricPrecision" text-anchor="start">5 Apr 00:00</text>
<text transform="translate(524.00,566.00) scale(0.880,1)" font-size="10.30" fill="#ffffff" stroke="#ffffff" stroke-width="0.35" word-spacing="1.5" text-rendering="geometricPrecision" text-anchor="start">5 Apr 08:00</text>
<text transform="translate(588.00,566.00) scale(0.880,1)" font-size="10.30" fill="#ffffff" stroke="#ffffff" stroke-width="0.35" word-spacing="1.5" text-rendering="geometricPrecision" text-anchor="start">5 Apr 16:00</text>
<text transform="translate(652.00,566.00) scale(0.880,1)" font-size="10.30" fill="#ffffff" stroke="#ffffff" stroke-width="0.35" word-spacing="1.5" text-rendering="geometricPrecision" text-anchor="start">6 Apr 00:00</text>
</svg></body></html>
